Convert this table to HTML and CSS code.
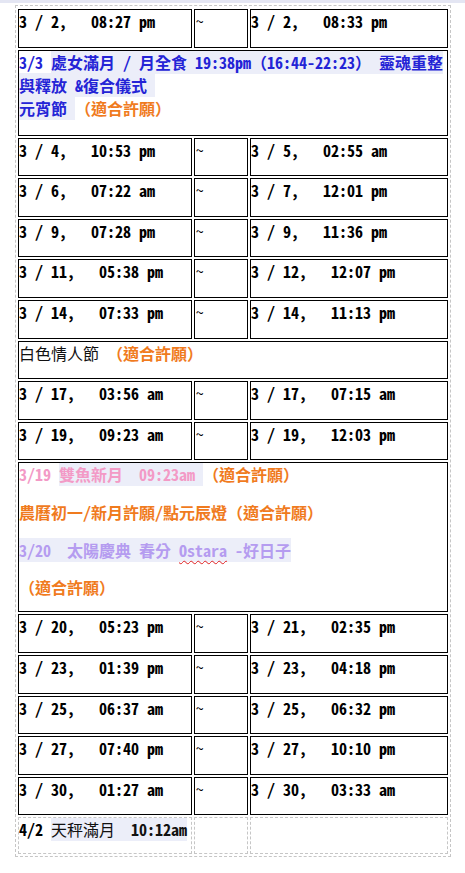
FILE: index.html
```html
<!DOCTYPE html>
<html lang="zh-Hant">
<head>
<meta charset="utf-8">
<title>三月月相時間表</title>
<link rel="stylesheet" href="styles.css">
</head>
<body>
<div class="topbar"></div>
<div class="sheet">
  <div class="row"><div class="cell t">3 / 2,   08:27 pm</div><div class="cell tilde">~</div><div class="cell t">3 / 2,   08:33 pm</div></div>
  <div class="row row-note2"><div class="cell wide"><span class="blue">3/3 </span><span class="blue hl">處女滿月 / 月全食 19:38pm（16:44-22:23） 靈魂重整<br>與釋放 &amp;復合儀式 </span><br><span class="blue hl">元宵節 </span><span class="orange">（適合許願）</span></div></div>
  <div class="row"><div class="cell t">3 / 4,   10:53 pm</div><div class="cell tilde">~</div><div class="cell t">3 / 5,   02:55 am</div></div>
  <div class="row"><div class="cell t">3 / 6,   07:22 am</div><div class="cell tilde">~</div><div class="cell t">3 / 7,   12:01 pm</div></div>
  <div class="row"><div class="cell t">3 / 9,   07:28 pm</div><div class="cell tilde">~</div><div class="cell t">3 / 9,   11:36 pm</div></div>
  <div class="row"><div class="cell t">3 / 11,   05:38 pm</div><div class="cell tilde">~</div><div class="cell t">3 / 12,   12:07 pm</div></div>
  <div class="row"><div class="cell t">3 / 14,   07:33 pm</div><div class="cell tilde">~</div><div class="cell t">3 / 14,   11:13 pm</div></div>
  <div class="row"><div class="cell wide"><span class="plain">白色情人節 </span><span class="orange">（適合許願）</span></div></div>
  <div class="row"><div class="cell t">3 / 17,   03:56 am</div><div class="cell tilde">~</div><div class="cell t">3 / 17,   07:15 am</div></div>
  <div class="row"><div class="cell t">3 / 19,   09:23 am</div><div class="cell tilde">~</div><div class="cell t">3 / 19,   12:03 pm</div></div>
  <div class="row row-note4"><div class="cell wide"><div class="para"><span class="pink">3/19 </span><span class="pink hl">雙魚新月  09:23am </span><span class="orange">（適合許願）</span></div><div class="para"><span class="orange">農曆初一/新月許願/點元辰燈（適合許願）</span></div><div class="para"><span class="lav hl">3/20  太陽慶典 春分 <span class="spell">Ostara</span> -好日子</span></div><div class="para"><span class="orange">（適合許願）</span></div></div></div>
  <div class="row"><div class="cell t">3 / 20,   05:23 pm</div><div class="cell tilde">~</div><div class="cell t">3 / 21,   02:35 pm</div></div>
  <div class="row"><div class="cell t">3 / 23,   01:39 pm</div><div class="cell tilde">~</div><div class="cell t">3 / 23,   04:18 pm</div></div>
  <div class="row"><div class="cell t">3 / 25,   06:37 am</div><div class="cell tilde">~</div><div class="cell t">3 / 25,   06:32 pm</div></div>
  <div class="row"><div class="cell t">3 / 27,   07:40 pm</div><div class="cell tilde">~</div><div class="cell t">3 / 27,   10:10 pm</div></div>
  <div class="row"><div class="cell t">3 / 30,   01:27 am</div><div class="cell tilde">~</div><div class="cell t">3 / 30,   03:33 am</div></div>
  <div class="row row-last"><div class="cell dash"><span class="t">4/2 </span><span class="plain hl">天秤滿月  <b class="tb">10:12am</b></span></div><div class="cell dash"></div><div class="cell dash"></div></div>
</div>
</body>
</html>
```

FILE: styles.css
```css
html, body {
  margin: 0;
  padding: 0;
  background: #ffffff;
}

body {
  font-family: "Noto Sans Mono CJK TC", "Noto Sans CJK TC", "DejaVu Sans Mono", monospace;
  font-size: 16px;
  color: #000;
}

.topbar {
  height: 3px;
  background: #e4e6f3;
}

.sheet {
  width: 430px;
  margin: 2px 0 0 15px;
  padding: 3px 2px 2px 2px;
  border: 1px dashed #c6c6c6;
  display: flex;
  flex-direction: column;
  gap: 2px;
}

.row {
  display: grid;
  grid-template-columns: 174px 54px 198px;
  column-gap: 2px;
  height: 38.6px;
}

.row-note2 { height: 86px; }
.row-note4 { height: 150px; }
.row-last { height: 37px; }

.cell {
  border: 1px solid #000;
  padding: 0;
  line-height: 23px;
  white-space: pre-wrap;
  overflow: hidden;
}

.wide {
  grid-column: 1 / 4;
}

.dash {
  border: 1px dashed #c6c6c6;
}

.t, .tb {
  font-weight: 700;
}

.tilde {
  font-size: 15px;
  line-height: 21px;
  padding-left: 1px;
}

.hl {
  background: #eceef9;
}

.blue {
  color: #2424d6;
  font-weight: 700;
}

.orange {
  color: #f07b1e;
  font-weight: 700;
}

.pink {
  color: #f39ac6;
  font-weight: 700;
}

.lav {
  color: #b59cf0;
  font-weight: 700;
}

.plain {
  color: #111;
}

.para {
  height: 37.7px;
}

.spell {
  text-decoration: underline wavy #e02020;
  text-decoration-thickness: 1px;
  text-underline-offset: 3px;
}
```
